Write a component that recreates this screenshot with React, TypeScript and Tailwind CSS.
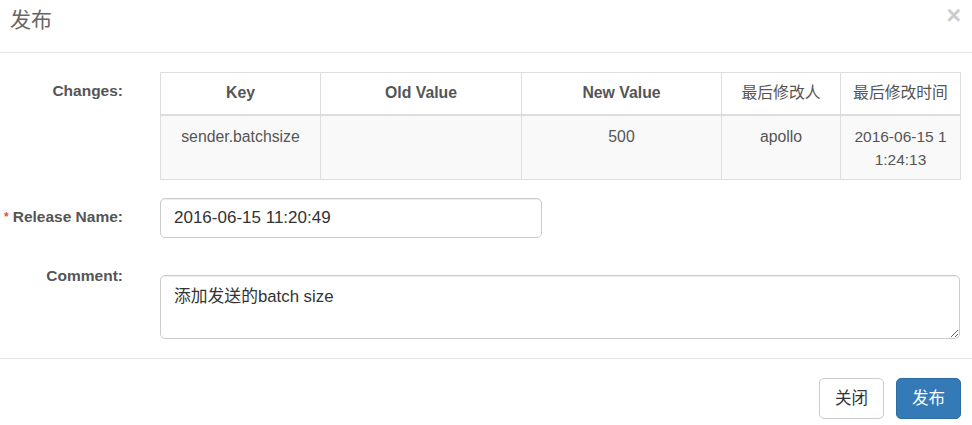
import React from 'react';

const font = { fontFamily: '"Liberation Sans", "Noto Sans CJK SC", sans-serif' };

const cols = [160, 201, 200, 119, 120];
const headers = ['Key', 'Old Value', 'New Value', '最后修改人', '最后修改时间'];

export default function App() {
  return (
    <div className="w-[972px] h-[425px] bg-white text-[#555] overflow-hidden" style={font}>
      {/* header */}
      <div className="h-[53px] border-b border-[#e5e5e5] flex items-start justify-between pl-[10px] pr-[11px]">
        <h4 className="text-[21px] leading-[26px] pt-[7px] text-[#666]">发布</h4>
        <span className="text-[25px] font-bold leading-none text-[#ccc] pt-[3px]">×</span>
      </div>

      {/* body */}
      <div className="pt-[19px] pb-[19px] pr-[12px] flex flex-col">
        <div className="flex">
          <label className="w-[123px] shrink-0 text-right font-bold text-[15.5px] leading-[22px] pt-[8px]">Changes:</label>
          <table className="ml-[37px] table-fixed border-collapse text-[15.8px] w-[800px]">
            <colgroup>
              {cols.map((w, i) => (
                <col key={i} style={{ width: w }} />
              ))}
            </colgroup>
            <thead>
              <tr>
                {headers.map((h) => (
                  <th key={h} className="border border-[#ddd] border-b-2 h-[42px] px-2 text-center font-bold leading-[22px]">
                    {h === '最后修改人' || h === '最后修改时间' ? <span className="font-normal">{h}</span> : h}
                  </th>
                ))}
              </tr>
            </thead>
            <tbody>
              <tr className="bg-[#f9f9f9] align-top">
                <td className="border border-[#ddd] px-2 pt-[9px] text-center leading-[23px]">sender.batchsize</td>
                <td className="border border-[#ddd] px-2 pt-[9px] text-center leading-[23px]"></td>
                <td className="border border-[#ddd] px-2 pt-[9px] text-center leading-[23px]">500</td>
                <td className="border border-[#ddd] px-2 pt-[9px] text-center leading-[23px]">apollo</td>
                <td className="border border-[#ddd] px-[11px] pt-[9px] pb-[8px] text-center leading-[23px] text-[15.5px] break-all">2016-06-15 11:24:13</td>
              </tr>
            </tbody>
          </table>
        </div>

        <div className="flex mt-[18px]">
          <label className="w-[123px] shrink-0 text-right font-bold text-[15.5px] leading-[22px] pt-[8px]">
            <span className="text-[#d9534f] text-[12px] align-top mr-[4px]">*</span>Release Name:
          </label>
          <input
            className="ml-[37px] w-[382px] h-[40px] border border-[#ccc] rounded-[5px] px-[13px] text-[17px] text-[#333] outline-none shadow-[inset_0_1px_1px_rgba(0,0,0,0.075)]"
            style={font}
            defaultValue="2016-06-15 11:20:49"
          />
        </div>

        <div className="flex mt-[37px]">
          <label className="w-[123px] shrink-0 text-right font-bold text-[15.5px] leading-[22px] -mt-[10px]">Comment:</label>
          <textarea
            className="ml-[37px] w-[801px] h-[64px] border border-[#ccc] rounded-[5px] px-[13px] pt-[10px] text-[16.8px] leading-[22px] text-[#333] outline-none resize-y shadow-[inset_0_1px_1px_rgba(0,0,0,0.075)]"
            style={font}
            defaultValue="添加发送的batch size"
          />
        </div>
      </div>

      {/* footer */}
      <div className="border-t border-[#e5e5e5] pt-[19px] pr-[11px] flex justify-end gap-[12px]">
        <button className="w-[65px] h-[41px] border border-[#ccc] rounded-[5px] bg-white text-[#333] text-[16.5px]" style={font}>
          关闭
        </button>
        <button className="w-[65px] h-[41px] border border-[#2e6da4] rounded-[5px] bg-[#337ab7] text-white text-[16.5px]" style={font}>
          发布
        </button>
      </div>
    </div>
  );
}
